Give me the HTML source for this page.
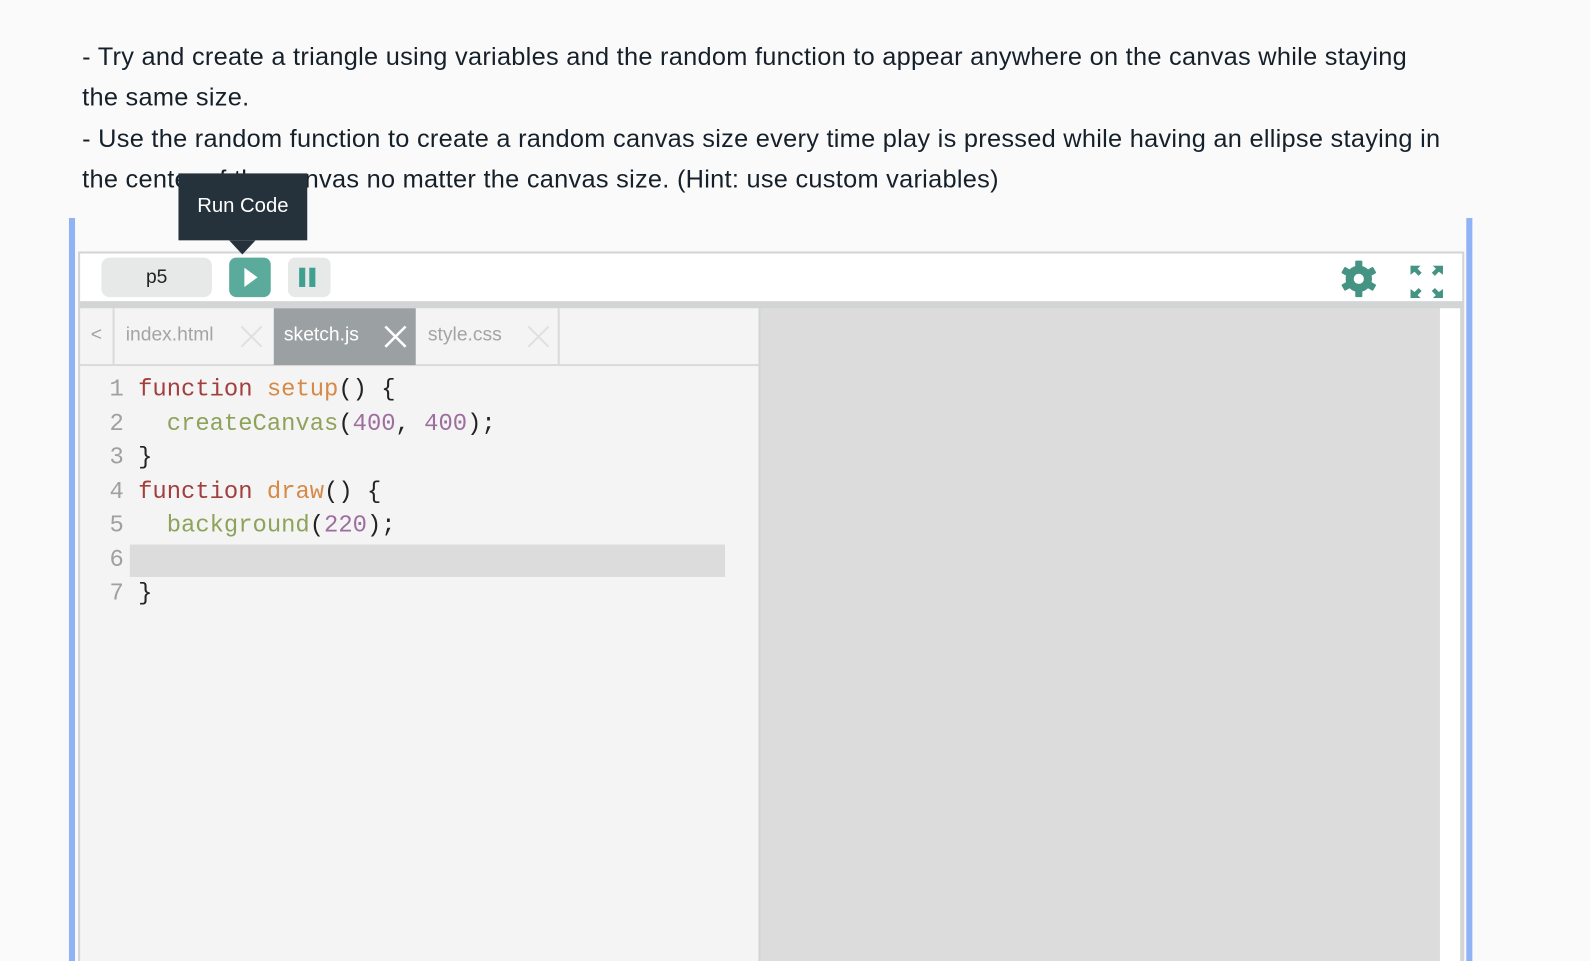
<!DOCTYPE html>
<html><head><meta charset="utf-8"><style>
*{margin:0;padding:0;box-sizing:border-box}
body{width:1590px;height:948px;overflow:hidden;background:#fafafa;font-family:"Liberation Sans",sans-serif;color:#1b1f23}
#w{position:relative;width:1568px;height:935px;transform:scale(1.01403);transform-origin:0 0}
.t{position:absolute;left:81px;font-size:25px;letter-spacing:0.27px;white-space:nowrap;line-height:40px;color:#16202a}
.bar{position:absolute;background:#8fb3f4}
.abs{position:absolute}
.code{position:absolute;font-family:"Liberation Mono",monospace;font-size:23.5px;white-space:pre;line-height:33.5px}
.ln{color:#a0a0a0}
.kw{color:#a33e3e}.fn{color:#d68a45}.bi{color:#8ea35a}.nu{color:#9e6e9e}.p{color:#222}
.tab{position:absolute;top:304px;height:56px;font-size:19px;line-height:54px;color:#a4a4a4}
.x{position:absolute;top:17px}
</style></head><body><div id="w">
<div class="t" style="top:36px">- Try and create a triangle using variables and the random function to appear anywhere on the canvas while staying</div>
<div class="t" style="top:76px">the same size.</div>
<div class="t" style="top:117px">- Use the random function to create a random canvas size every time play is pressed while having an ellipse staying in</div>
<div class="t" style="top:157px">the center of the canvas no matter the canvas size. (Hint: use custom variables)</div>

<div class="bar" style="left:68px;top:215px;width:6px;height:733px"></div>
<div class="bar" style="left:1446px;top:215px;width:6px;height:733px"></div>

<div class="abs" style="left:77px;top:248px;width:1367px;height:700px;background:#d2d4d6"></div>
<div class="abs" style="left:79px;top:250px;width:1363px;height:47px;background:#fff"></div>
<div class="abs" style="left:100px;top:254px;width:109px;height:39px;background:#e7e8e8;border-radius:8px;font-size:19px;text-align:center;line-height:39px;color:#222">p5</div>
<div class="abs" style="left:226px;top:254px;width:41px;height:39px;background:#5aab9c;border-radius:7px"><svg width="41" height="39"><path d="M15 10 L28 19.5 L15 29 Z" fill="#fff"/></svg></div>
<div class="abs" style="left:284px;top:254px;width:42px;height:39px;background:#e7e8e8;border-radius:7px"><div class="abs" style="left:11px;top:10px;width:6px;height:19px;background:#3fa090"></div><div class="abs" style="left:21px;top:10px;width:6px;height:19px;background:#3fa090"></div></div>
<svg class="abs" style="left:1318px;top:255px" width="44" height="40" viewBox="0 0 44 40"><g fill="#459483"><circle cx="22" cy="20" r="13"/><g id="tt"><rect x="18.5" y="2" width="7" height="8" rx="1"/><rect x="18.5" y="30" width="7" height="8" rx="1"/></g><use href="#tt" transform="rotate(60 22 20)"/><use href="#tt" transform="rotate(120 22 20)"/></g><circle cx="22" cy="20" r="5" fill="#fff"/></svg>
<svg class="abs" style="left:1390px;top:262px" width="34" height="32" viewBox="0 0 34 32"><g fill="#459483"><path d="M1 0H11L8 3L12 7L9 10L5 6L1 9Z"/><path d="M33 0H23L26 3L22 7L25 10L29 6L33 9Z"/><path d="M1 32H11L8 29L12 25L9 22L5 26L1 23Z"/><path d="M33 32H23L26 29L22 25L25 22L29 26L33 23Z"/></g></svg>

<div class="abs" style="left:79px;top:304px;width:669px;height:644px;background:#f4f4f4"></div>
<div class="abs" style="left:79px;top:359px;width:669px;height:2px;background:#dadada"></div>
<div class="abs" style="left:750px;top:304px;width:670px;height:644px;background:#dcdcdc"></div>
<div class="abs" style="left:1420px;top:304px;width:20px;height:644px;background:#fff"></div>
<div class="tab" style="left:79px;width:34px;text-align:center;border-right:2px solid #dadada">&lt;</div>
<div class="tab" style="left:115px;width:154px;padding-left:9px">index.html<svg class="x" style="left:122px" width="22" height="22"><path d="M1 1L21 21M21 1L1 21" stroke="#e0e0e0" stroke-width="2"/></svg></div>
<div class="tab" style="left:270px;width:140px;padding-left:10px;background:#9ba1a3;color:#fff">sketch.js<svg class="x" style="left:109px" width="22" height="22"><path d="M1 1L21 21M21 1L1 21" stroke="#fff" stroke-width="2.5"/></svg></div>
<div class="tab" style="left:412px;width:140px;padding-left:10px;border-right:2px solid #dadada">style.css<svg class="x" style="left:108px" width="22" height="22"><path d="M1 1L21 21M21 1L1 21" stroke="#e0e0e0" stroke-width="2"/></svg></div>

<div class="abs" style="left:128px;top:537px;width:587px;height:32px;background:#dcdcdc"></div>
<div class="code" style="left:108px;top:368px"><span class="ln">1</span> <span class="kw">function</span> <span class="fn">setup</span><span class="p">() {</span>
<span class="ln">2</span>   <span class="bi">createCanvas</span><span class="p">(</span><span class="nu">400</span><span class="p">, </span><span class="nu">400</span><span class="p">);</span>
<span class="ln">3</span> <span class="p">}</span>
<span class="ln">4</span> <span class="kw">function</span> <span class="fn">draw</span><span class="p">() {</span>
<span class="ln">5</span>   <span class="bi">background</span><span class="p">(</span><span class="nu">220</span><span class="p">);</span>
<span class="ln">6</span>
<span class="ln">7</span> <span class="p">}</span></div>

<div class="abs" style="left:176px;top:171px;width:127px;height:66px;background:#25323b;color:#fff;font-size:20px;text-align:center;line-height:64px">Run Code</div>
<div class="abs" style="left:226px;top:237px;width:0;height:0;border-left:13px solid transparent;border-right:13px solid transparent;border-top:14px solid #25323b"></div>
</div></body></html>
